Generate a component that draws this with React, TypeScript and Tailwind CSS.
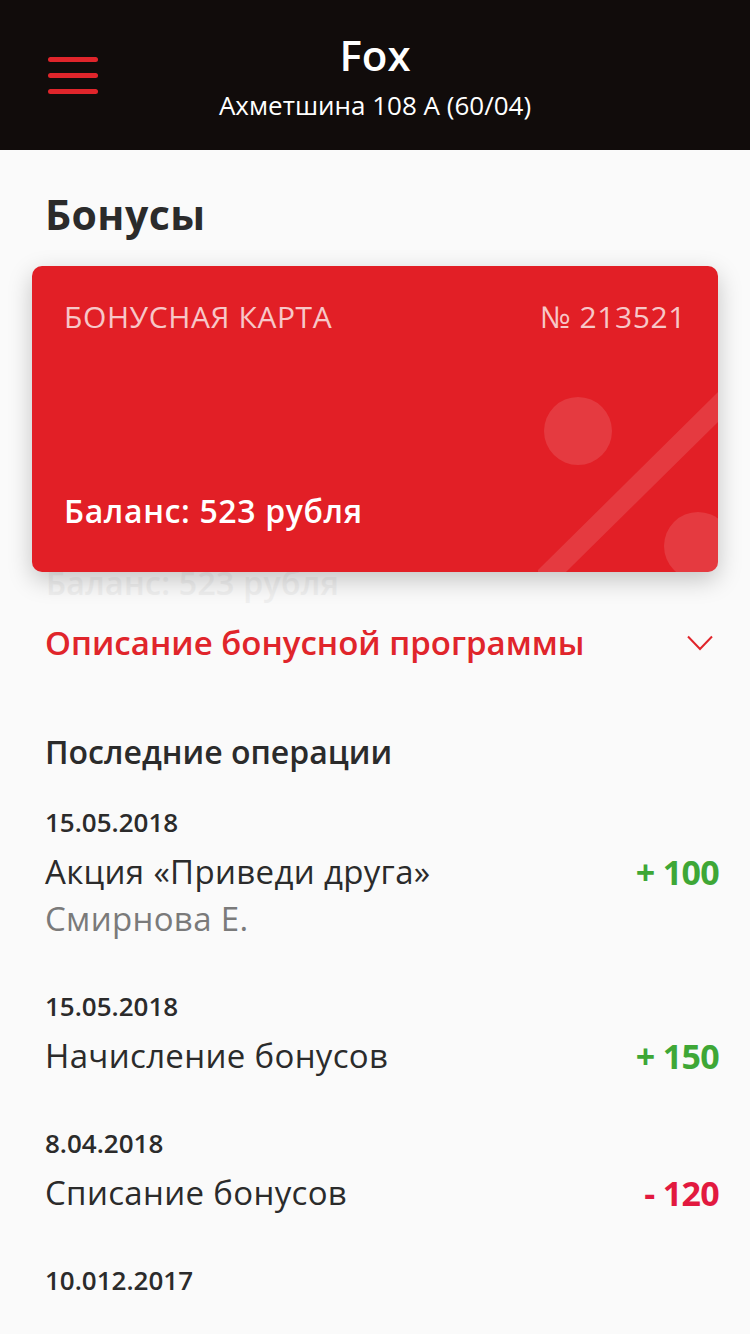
const ops = [
  { date: "15.05.2018", title: "Акция «Приведи друга»", sub: "Смирнова Е.", amount: "+ 100", plus: true },
  { date: "15.05.2018", title: "Начисление бонусов", amount: "+ 150", plus: true },
  { date: "8.04.2018", title: "Списание бонусов", amount: "- 120", plus: false },
];

function Hamburger() {
  return (
    <div className="flex flex-col gap-[11px] w-[50px]">
      <span className="h-[5px] rounded-full bg-[#e0252b]" />
      <span className="h-[5px] rounded-full bg-[#e0252b]" />
      <span className="h-[5px] rounded-full bg-[#e0252b]" />
    </div>
  );
}

function BonusCard() {
  return (
    <div className="relative mx-8 mt-[31px]">
      <p className="absolute left-[14px] top-[301px] text-[32px] font-semibold text-[#efefef] leading-none tracking-[0.01em]">
        Баланс: 523 рубля
      </p>
      <div className="relative h-[306px] rounded-[10px] bg-[#e21f26] overflow-hidden shadow-[0_8px_24px_rgba(0,0,0,0.22)] px-8 pt-[36px] pb-[45px] flex flex-col justify-between">
        <svg className="absolute right-0 bottom-0" width="180" height="180" viewBox="0 0 180 180" aria-hidden>
          <circle cx="40" cy="39" r="34" fill="rgba(255,255,255,0.12)" />
          <circle cx="160" cy="154" r="34" fill="rgba(255,255,255,0.12)" />
          <path d="M180 0 L180 30 L28 180 L-2 180 Z" fill="rgba(255,255,255,0.12)" />
        </svg>
        <div className="relative flex justify-between text-[30px] text-white/75 leading-none tracking-[0.02em]">
          <span>БОНУСНАЯ КАРТА</span>
          <span>№ 213521</span>
        </div>
        <p className="relative text-[32px] font-semibold text-white leading-none tracking-[0.02em]">Баланс: 523 рубля</p>
      </div>
    </div>
  );
}

export default function App() {
  return (
    <div
      className="w-[750px] h-[1334px] bg-[#fafafa] overflow-hidden"
      style={{ fontFamily: "'Open Sans', 'Noto Sans', sans-serif" }}
    >
      <header className="h-[150px] bg-[#110c0b] flex items-center px-12">
        <Hamburger />
        <div className="flex-1 flex flex-col items-center pr-[50px] pt-[2px]">
          <h1 className="text-[42px] font-semibold text-white leading-none">Fox</h1>
          <p className="mt-[16px] text-[26px] text-white leading-none">Ахметшина 108 А (60/04)</p>
        </div>
      </header>

      <h2 className="px-[45px] pt-[44px] text-[41px] font-bold text-[#2b2b2b] leading-none tracking-[0.01em]">Бонусы</h2>

      <BonusCard />

      <div className="mt-[54px] pl-[45px] pr-[37px] flex items-center justify-between">
        <span className="text-[33px] font-semibold text-[#e0252b] leading-none">Описание бонусной программы</span>
        <svg width="26" height="16" viewBox="0 0 26 16" aria-hidden>
          <polyline points="1,1.5 13,14 25,1.5" fill="none" stroke="#e0252b" strokeWidth="2" />
        </svg>
      </div>

      <h3 className="mt-[77px] px-[45px] text-[32px] font-semibold text-[#2b2b2b] leading-none">Последние операции</h3>

      <div className="pl-[45px] pr-[31px]">
        {ops.map((o, i) => (
          <div key={i} className={i === 0 ? "mt-[40px]" : "mt-[51px]"}>
            <p className="text-[26px] font-semibold text-[#2b2b2b] leading-[28px]">{o.date}</p>
            <div className="mt-[14px] flex justify-between items-start">
              <div>
                <p className="text-[33px] text-[#2b2b2b] leading-[44px] tracking-[0.01em]">{o.title}</p>
                {o.sub && <p className="mt-[3px] text-[33px] text-[#7a7a7a] leading-[44px] tracking-[0.01em]">{o.sub}</p>}
              </div>
              <span
                className={
                  o.plus
                    ? "text-[34px] font-bold text-[#3ea736] leading-[44px] tracking-[-0.02em]"
                    : "text-[34px] font-bold text-[#e2193f] leading-[44px] tracking-[-0.02em]"
                }
              >
                {o.amount}
              </span>
            </div>
          </div>
        ))}
        <p className="mt-[51px] text-[26px] font-semibold text-[#2b2b2b] leading-[28px]">10.012.2017</p>
      </div>
    </div>
  );
}
